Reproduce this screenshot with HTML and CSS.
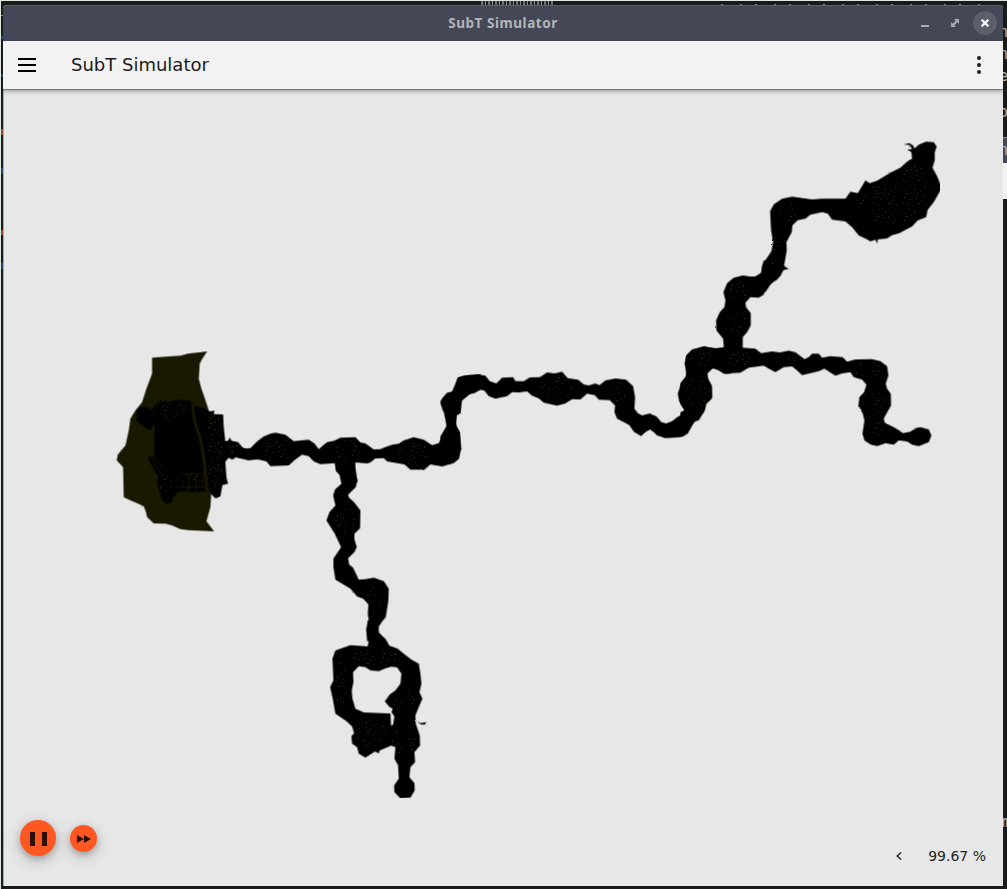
FILE: index.html
```html
<!DOCTYPE html>
<html lang="en">
<head>
<meta charset="utf-8">
<title>SubT Simulator</title>
<link rel="stylesheet" href="styles.css">
</head>
<body>
<div class="desktop">
  <div class="behind-top"></div>
  <div class="behind-top-right"></div>
  <div class="behind-left"></div>
  <div class="behind-right">
    <span class="frag f1">n</span><span class="frag f2">n</span><span class="frag f3">e</span><span class="frag f4">o</span>
    <div class="other-title"><span class="frag">n</span></div>
    <div class="other-bar"></div>
    <span class="frag f5">m</span>
  </div>
  <div class="window">
    <header class="titlebar">
      <span class="spacer"></span>
      <span class="title">SubT Simulator</span>
      <div class="controls">
        <svg class="ctl" viewBox="0 0 24 24"><path d="M8 14h8v2H8z" fill="#a9abb3"/></svg>
        <svg class="ctl" viewBox="0 0 24 24"><path d="M11 8h5v5l-1.700-1.700-3 3L13 16H8v-5l1.700 1.700 3-3z" fill="#a9abb3"/></svg>
        <svg class="ctl close" viewBox="0 0 24 24"><path d="M8.700 8.700l6.600 6.600M15.300 8.700l-6.600 6.600" stroke="#fff" stroke-width="2.300"/></svg>
      </div>
    </header>
    <div class="toolbar">
      <svg class="menu" viewBox="0 0 18 14"><path d="M0 0h18v2H0zM0 6h18v2H0zM0 12h18v2H0z"/></svg>
      <h1 class="app-name">SubT Simulator</h1>
      <svg class="more" viewBox="0 0 4 18"><circle cx="2" cy="2" r="2"/><circle cx="2" cy="9" r="2"/><circle cx="2" cy="16" r="2"/></svg>
    </div>
    <main class="scene">
      <svg class="map" viewBox="3 89 1000 797">
        <defs>
          <pattern id="specks" width="29" height="23" patternUnits="userSpaceOnUse">
            <path d="M2 3h1v1h-1zM7 9h2v1h-2zM15 4h1v2h-1zM11 15h1v1h-1zM24 12h1v1h-1zM19 19h2v1h-2zM4 18h1v1h-1zM12 8h1v1h-1zM22 16h1v1h-1zM8 20h1v1h-1z" fill="#2c270a"/>
            <path d="M9 2h1v1h-1zM21 7h1v1h-1zM14 11h1v1h-1zM26 20h1v1h-1zM6 6h1v1h-1z" fill="#331a0c"/>
            <path d="M5 13h2v1h-2zM17 14h1v1h-1zM25 3h1v1h-1zM18 9h1v2h-1z" fill="#222225"/>
          </pattern>
          <filter id="rough" x="0" y="0" width="1" height="1" color-interpolation-filters="sRGB">
            <feTurbulence type="fractalNoise" baseFrequency="0.35" numOctaves="2" seed="4" result="n"/>
            <feDisplacementMap in="SourceGraphic" in2="n" scale="1.500" xChannelSelector="R" yChannelSelector="G"/>
          </filter>
        </defs>
        <g filter="url(#rough)" transform="translate(.4 .4)">
          <!-- staging area -->
          <g transform="translate(100 340) scale(.33333)">
            <path fill="#191800" d="M155 52L205 48 240 46 262 40 320 33 304 58 298 70 295 115 303 145 312 170 325 210 335 330 332 470 330 500 318 542 341 573 265 569 240 566 215 555 195 550 160 549 140 530 136 513 130 498 110 488 90 480 70 470 68 380 49 360 52 343 75 315 85 270 90 235 105 210 125 185 138 145 155 100z"/>
            <path d="M110 207L125 199 145 203 150 210 170 188 188 178 205 185 230 178 272 182 275 195 300 200 330 213 342 210 340 221 368 222 370 260 375 305 374 355 378 410 383 430 366 434 360 468 345 474 335 464 325 450 285 455 235 452 218 470 214 487 197 490 185 480 170 430 172 405 145 360 146 345 162 350 163 245 150 270 125 255 108 240z"/>
            <path fill="none" stroke="#191800" stroke-width="9" d="M276 190L282 240 300 295 310 350 320 450"/>
            <path fill="none" stroke="#191800" stroke-width="3" d="M145 345L188 380M155 360L182 402M180 205L200 190 232 220 210 245 185 218M235 190L260 215M225 425L250 400H315M265 400V455M287 400V450M308 405V440M235 440H320M325 230L345 245 325 262M345 330L368 340 345 360M340 270L365 290M338 380L368 395M340 445L350 415"/>
            <path d="M370 305L384 300 388 290 393 301 413 305 426 320 440 328 470 322 470 358 430 350 408 350 395 358 385 352 370 370z"/>
            <path fill="none" stroke="#898450" stroke-width="2" d="M385 318l4 3M397 316l3 4M406 324l4-3M393 333l5 2M409 314l5 4M416 327l4 3M423 335l5 0"/>
          </g>
          <!-- west gallery -->
          <g transform="translate(220 360) scale(.33333)">
            <path d="M40 255L70 265 90 263 110 243 130 228 150 220 165 217 195 223 220 242 265 238 282 249 295 266 308 255 320 245 342 241 360 232 405 230 420 246 435 249 460 267 480 266 490 262 515 253 535 250 550 240 580 230 610 238 635 254 655 248 668 222 682 195 672 165 676 150 661 133 665 115 680 97 696 94 710 70 712 52 730 46 780 42V88L760 91 740 108 722 122 721 158 709 165 705 190 718 215 722 265 716 295 700 308 665 318 630 312 612 328 570 328 552 312 500 303 490 293 465 294 450 306 440 309 405 306 405 320 411 365H363L357 342 347 332 345 308 300 311 280 303 265 287 245 283 225 297 205 315 150 317 138 303 110 296 85 300 50 292z"/>
          </g>
          <!-- middle gallery -->
          <g transform="translate(440 340) scale(.33333)">
            <path d="M0 182L15 165 35 154 52 112 80 105 115 102 135 106 148 122 168 129 185 112 218 110 225 122 250 122 268 111 298 110 320 96 343 99 365 94 382 113 413 118 430 132 445 135 465 129 477 134 495 120 525 114 557 118 578 137 584 170 582 205 592 218 605 225 628 219 648 228 663 245 677 249 695 242 710 230 725 222 731 208 716 182 712 160 723 125 736 112 739 92 733 70 738 45 755 30 790 18 825 25 870 27V100H850L832 86 815 84 800 97 803 115 814 135 814 175 798 190 793 210 775 240 762 243 742 280 720 290 675 293 650 285 640 275 628 267 613 277 602 287 580 274 567 254 530 235 522 215 524 195 508 179 475 178 463 164 440 160 420 177 395 176 375 189 350 196 310 187 295 174 275 166 260 153 235 156 215 155 200 167 165 175 145 167 132 151 120 148 102 158 82 162 65 178 61 208 48 223 47 260 58 275 62 330H0V288L18 257 14 225 5 205z"/>
          </g>
          <!-- junction and east branch -->
          <g transform="translate(680 260) scale(.33333)">
            <path d="M250 0H310L309 15 322 24 308 28 301 45 290 58 270 70 255 85 250 103 235 112 210 110 195 127 197 140 211 158 211 195 200 215 187 230 187 262 225 265 242 278 275 273 298 276 325 271 345 275 372 296 385 290 395 280 415 280 425 292 450 287 487 290 500 304 525 297 575 296 600 302 620 317 624 345 616 370 620 385 631 400 632 435 618 460 610 475 613 487 640 500 655 509 668 518 690 514 705 503 720 500 745 507 753 525 745 545 715 557 695 553 680 543 655 540 640 553 615 548 590 557 570 552 552 540 546 520 552 480 547 460 534 435 537 410 551 395 558 373 545 358 520 350 510 335 485 339 465 346 448 335 432 325 415 332 365 344 350 330 335 318 310 320 285 335 265 325 250 316 205 322 180 337 135 340 115 330 98 322 80 340 82 358 94 380 95 412 75 430 70 455 35 492 10 527 0 528V455L14 450 0 430V370L18 345 14 310 18 285 35 267 70 259 105 264 130 260 128 235 108 210 107 180 118 155 132 140 135 120 129 95 140 68 160 52 188 45 220 50 242 40 246 15z"/>
          </g>
          <!-- north-east cavern -->
          <g transform="translate(740 130) scale(.33333)">
            <path d="M0 437L45 439 62 427 66 402 80 382 93 362 98 335 92 300 89 242 100 222 125 205 155 199 215 207 245 205 315 205 330 184 352 188 375 150 388 158 410 151 450 127 480 112 500 94 515 85 513 65 500 57 515 56 508 44 489 42 507 38 518 45 522 54 535 43 557 34 580 35 589 49 583 65 583 90 576 112 590 137 600 162 600 180 580 215 562 238 557 260 532 270 515 288 492 300 477 308 455 314 440 324 412 327 411 340 405 328 390 333 380 327 355 315 335 290 315 273 275 268 262 250 245 245 210 253 195 265 172 269 156 285 154 305 138 335 139 360 130 412 147 415 129 419 120 435 90 463 75 485H0z"/>
          </g>
          <!-- south shaft -->
          <g transform="translate(310 450) scale(.33333)">
            <path d="M70 20H140L130 42 134 70 141 90 136 110 113 133 116 142 131 155 150 180 149 233 132 250 132 266 139 290 132 305 113 323 116 342 128 352 145 388 165 386 190 382 220 392 235 415 234 450 226 500 205 525 205 545 228 572H170L167 535 176 518 172 490 174 462 158 445 140 438 120 415 95 400 75 388 69 350 69 325 80 308 92 290 73 250 48 210 57 185 75 165 68 135 74 117 93 100 90 75 77 60z"/>
          </g>
          <!-- loop chamber -->
          <g transform="translate(310 620) scale(.33333)">
            <path fill-rule="evenodd" d="M172 0H217L203 22 205 38 225 55 237 76 262 85 280 100 302 117 325 130 330 160 333 190 327 215 336 235 325 260 315 285 316 310 328 345 329 375 312 395 314 425 300 440 297 470 312 488 313 510 300 532 270 534 252 515 251 495 265 475 263 435 252 415 255 380 242 376 208 390 205 399 194 393 165 412 145 400 140 380 125 370 123 347 131 338 125 318 108 302 75 280 66 230 59 200 69 180 66 115 75 90 120 74 172 78 176 55 168 25zM128 155L145 137 165 140 180 150 205 152 225 144 242 139 260 141 273 160 270 190 255 210 238 222 223 243 238 260 247 265 243 275 252 288 248 313 242 316 240 279 215 278 160 276 135 265 126 235 124 210 129 185z"/>
            <path d="M319 300L330 308 348 305 343 313 330 312z"/>
          </g>
        </g>
        <g fill="url(#specks)" shape-rendering="crispEdges">
          <ellipse cx="168" cy="408" rx="24" ry="9"/><rect x="155" y="474" width="55" height="18"/><rect x="208" y="415" width="14" height="70"/>
          <ellipse cx="276" cy="449" rx="16" ry="13"/><ellipse cx="346" cy="449" rx="16" ry="9"/><ellipse cx="413" cy="453" rx="15" ry="12"/>
          <ellipse cx="556" cy="387" rx="16" ry="12"/><ellipse cx="620" cy="393" rx="10" ry="10"/><ellipse cx="701" cy="360" rx="11" ry="9"/><ellipse cx="697" cy="392" rx="11" ry="14"/>
          <ellipse cx="738" cy="322" rx="9" ry="12"/><ellipse cx="739" cy="290" rx="9" ry="9"/><ellipse cx="740" cy="359" rx="18" ry="7"/><ellipse cx="790" cy="360" rx="18" ry="5"/><ellipse cx="866" cy="369" rx="18" ry="7"/><ellipse cx="876" cy="402" rx="9" ry="13"/><ellipse cx="876" cy="430" rx="9" ry="8"/>
          <ellipse cx="787" cy="212" rx="11" ry="9"/><ellipse cx="888" cy="203" rx="30" ry="22"/><ellipse cx="915" cy="188" rx="17" ry="24"/><ellipse cx="775" cy="250" rx="5" ry="18"/>
          <ellipse cx="345" cy="520" rx="11" ry="13"/><ellipse cx="375" cy="596" rx="8" ry="11"/><ellipse cx="376" cy="658" rx="28" ry="8"/><ellipse cx="341" cy="685" rx="7" ry="22"/><ellipse cx="405" cy="700" rx="13" ry="12"/><ellipse cx="371" cy="733" rx="15" ry="15"/><ellipse cx="404" cy="742" wx="12" rx="12" ry="13"/>
        </g>
        <path d="M156 357h10v40h-10zM130 430h18v60h-18zM165 500h36v18h-36z" fill="url(#specks)" opacity=".3"/>
      </svg>
      <footer class="status">
        <div class="player">
          <button class="fab play"><svg viewBox="0 0 17 14"><path d="M0 0h5v14H0zM12 0h5v14h-5z"/></svg></button>
          <button class="fab step"><svg viewBox="0 0 14 8"><path d="M0 0l7 4-7 4zM7 0l7 4-7 4z"/></svg></button>
        </div>
        <div class="rate"><svg viewBox="0 0 6 8"><path d="M5 .5L1.200 4 5 7.500" fill="none" stroke="#222" stroke-width="1.400"/></svg><span>99.67 %</span></div>
      </footer>
    </main>
  </div>
</div>
</body>
</html>
```
FILE: styles.css
```css
* { box-sizing: border-box; }
body { margin: 0; font-family: "DejaVu Sans", sans-serif; }
.desktop { position: relative; width: 1007px; height: 889px; overflow: hidden; background: #191a1a; border-top: 1px solid #dfe7e1; border-left: 1px solid #dfe7e1; }
.behind-top { position: absolute; left: 480px; top: 0; width: 72px; height: 4px; background: repeating-linear-gradient(90deg, #6d716f 0 2px, #252a27 2px 4px, #8a8d8b 4px 5px, #1a1f1c 5px 7px); }
.behind-top-right { position: absolute; left: 720px; top: 3px; width: 270px; height: 1px; background: repeating-linear-gradient(90deg, #8b8a78 0 2px, transparent 2px 19px, #777 19px 21px, transparent 21px 34px); }
.behind-left { position: absolute; left: 0; top: 13px; width: 2px; height: 260px; background: linear-gradient(#6797a5, #6797a5) 0 1px / 2px 1px no-repeat, linear-gradient(#24406b, #24406b) 0 22px / 2px 3px no-repeat, linear-gradient(#24406b, #24406b) 0 60px / 2px 3px no-repeat, linear-gradient(#8a5035, #8a5035) 0 115px / 2px 6px no-repeat, linear-gradient(#24406b, #24406b) 0 154px / 2px 6px no-repeat, linear-gradient(#8a5035, #8a5035) 0 216px / 2px 5px no-repeat, linear-gradient(#24406b, #24406b) 0 249px / 2px 6px no-repeat; }
.behind-right { position: absolute; left: 1002px; top: 0; width: 4px; height: 888px; overflow: hidden; color: #b4b4b4; font: 15px/18px "DejaVu Sans Mono", monospace; }
.frag { position: absolute; left: -4px; }
.f1 { top: 22px; }
.f2 { top: 44px; }
.f3 { top: 66px; }
.f4 { top: 102px; }
.f5 { top: 812px; }
.other-title { position: absolute; top: 136px; width: 4px; height: 26px; background: #444755; border-top: 1px solid #888; }
.other-title .frag { top: 3px; }
.other-bar { position: absolute; top: 162px; width: 4px; height: 36px; background: #f2f2f2; }
.window { position: absolute; left: 2px; top: 4px; width: 1000px; height: 881px; display: flex; flex-direction: column; border-radius: 4px 4px 0 0; overflow: hidden; background: #e7e7e7; }
.titlebar { height: 36px; flex: none; display: grid; grid-template-columns: 1fr auto 1fr; align-items: center; padding-bottom: 1px; background: #444755; border-top: 1px solid #5c5f6c; color: #b3b5bc; }
.title { padding-bottom: 1px; font: bold 13.5px/20px "Noto Sans", sans-serif; letter-spacing: .55px; }
.controls { display: flex; justify-content: flex-end; gap: 6px; padding-right: 6px; }
.ctl { width: 24px; height: 24px; }
.close { border-radius: 50%; background: #5b5e6b; }
.toolbar { position: relative; z-index: 1; height: 48px; flex: none; display: flex; align-items: center; padding: 0 22px 0 15px; background: #f2f2f2; box-shadow: 0 1px 1px rgba(0,0,0,.3), 0 2px 5px rgba(0,0,0,.35); }
.menu { width: 18px; height: 14px; }
.app-name { flex: 1; margin: 0 0 0 35px; font-size: 18px; font-weight: normal; line-height: 24px; color: #1b1b1b; }
.more { width: 4px; height: 18px; fill: #1d1d1d; }
.scene { flex: 1; display: grid; min-height: 0; border-left: 1px solid #aaa; }
.map { grid-area: 1 / 1; width: 1000px; height: 797px; margin-left: -1px; }
.status { grid-area: 1 / 1; align-self: end; display: flex; align-items: center; justify-content: space-between; height: 72px; padding: 0 17px 0 16px; }
.player { display: flex; align-items: center; gap: 14px; padding-bottom: 24px; }
.fab { display: grid; place-items: center; padding: 0; border: 0; border-radius: 50%; background: #ff5722; box-shadow: 0 3px 6px rgba(0,0,0,.2), 0 4px 16px rgba(0,0,0,.2); }
.fab svg { fill: #2c0f06; }
.play { width: 36px; height: 36px; }
.play svg { width: 17px; height: 14px; margin-top: 2px; }
.step { width: 27px; height: 27px; }
.step svg { width: 14px; height: 8px; margin-top: 1px; }
.rate { display: flex; align-items: center; gap: 26px; padding-top: 12px; font-size: 14px; line-height: 18px; color: #222; }
.rate svg { width: 6px; height: 8px; }
```
